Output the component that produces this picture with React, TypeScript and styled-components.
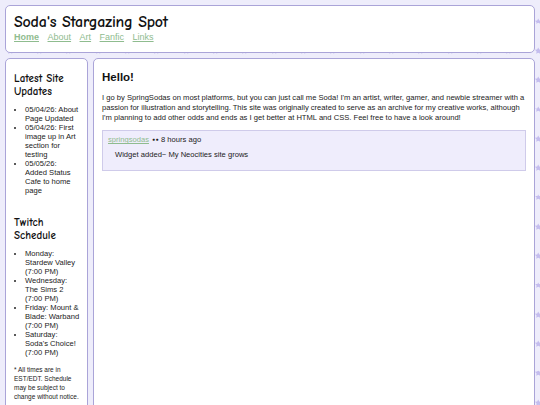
import React from "react";
import styled, { createGlobalStyle } from "styled-components";

const starTile = encodeURIComponent(
  `<svg xmlns="http://www.w3.org/2000/svg" width="29.33" height="29.33"><path d="M10 18l1 2.1 2.3.3-1.7 1.6.4 2.3-2-1.1-2 1.1.4-2.3-1.7-1.6 2.3-.3z" fill="#c4bdee"/></svg>`
);

const GlobalStyle = createGlobalStyle`
  *, *::before, *::after {
    box-sizing: border-box;
  }
  html, body {
    margin: 0;
    padding: 0;
  }
  body {
    background-color: #eeedfb;
    background-image: url("data:image/svg+xml,${starTile}");
    background-size: 29.33px 29.33px;
    font-family: "Liberation Sans", Arial, sans-serif;
    color: #111;
  }
`;

const Page = styled.div`
  display: flex;
  flex-direction: column;
  gap: 5px;
  padding: 5px;
`;

const Box = styled.div`
  background: #fff;
  border: 1px solid #aaa4d8;
  border-radius: 5px;
`;

const Header = styled(Box)`
  height: 48px;
  padding: 0 8px;
`;

const SiteTitle = styled.h1`
  margin: 7px 0 0;
  font-family: "Comic Sans MS", "Comic Neue", "DejaVu Sans", sans-serif;
  font-size: 16px;
  font-weight: bold;
  line-height: 18px;
  letter-spacing: -0.2px;
`;

const Nav = styled.nav`
  display: flex;
  gap: 8.5px;
  margin-top: 1px;
`;

const NavLink = styled.a<{ $active?: boolean }>`
  color: #8fbc8f;
  font-size: 9px;
  line-height: 10px;
  font-weight: ${(p) => (p.$active ? "bold" : "normal")};
  text-decoration: underline;
`;

const Columns = styled.div`
  display: flex;
  gap: 5px;
  align-items: stretch;
`;

const Sidebar = styled(Box)`
  width: 83px;
  flex: none;
  min-height: 420px;
  padding: 0 1px 0 8px;
`;

const SideHeading = styled.h2<{ $top: number }>`
  margin: ${(p) => p.$top}px 0 0;
  font-family: "Comic Sans MS", "Comic Neue", "DejaVu Sans", sans-serif;
  font-size: 11px;
  font-weight: bold;
  line-height: 13px;
`;

const SideList = styled.ul`
  margin: 7px 6px 0 0;
  padding-left: 11px;
  font-size: 7.6px;
  line-height: 9px;
  color: #222;
  li::marker {
    font-size: 7px;
  }
`;

const Footnote = styled.p`
  width: 70px;
  margin: 8px 0 0;
  font-size: 6.5px;
  line-height: 9px;
  color: #222;
`;

const Main = styled(Box)`
  flex: 1;
  min-height: 420px;
  padding: 0 8px;
`;

const Hello = styled.h2`
  margin: 11px 0 0;
  font-size: 11.5px;
  font-weight: bold;
  line-height: 14px;
`;

const Intro = styled.p`
  margin: 9px 0 0;
  font-size: 7.6px;
  line-height: 9.8px;
  color: #222;
`;

const Status = styled.div`
  margin-top: 8px;
  background: #efedfc;
  border: 1px solid #cfcbea;
  padding: 4px 5px 10px;
  font-size: 7.6px;
  line-height: 9.5px;
  color: #222;
`;

const StatusName = styled.a`
  color: #8fbc8f;
  text-decoration: underline;
`;

const Dots = styled.span`
  font-size: 5px;
  letter-spacing: 0.5px;
  margin: 0 2px 0 3px;
  vertical-align: 1px;
`;

const StatusBody = styled.div`
  margin: 5.5px 0 0 7px;
`;

const pm = "(7:00\u00a0PM)";

export default function App() {
  return (
    <>
      <GlobalStyle />
      <Page>
        <Header>
          <SiteTitle>Soda's Stargazing Spot</SiteTitle>
          <Nav>
            <NavLink $active>Home</NavLink>
            <NavLink>About</NavLink>
            <NavLink>Art</NavLink>
            <NavLink>Fanfic</NavLink>
            <NavLink>Links</NavLink>
          </Nav>
        </Header>
        <Columns>
          <Sidebar>
            <SideHeading $top={13}>Latest Site Updates</SideHeading>
            <SideList>
              <li>05/04/26: About Page Updated</li>
              <li>05/04/26: First image up in Art section for testing</li>
              <li>05/05/26: Added Status Cafe to home page</li>
            </SideList>
            <SideHeading $top={21}>Twitch Schedule</SideHeading>
            <SideList>
              <li>Monday: Stardew Valley {pm}</li>
              <li>Wednesday: The Sims 2 {pm}</li>
              <li>Friday: Mount &amp; Blade: Warband {pm}</li>
              <li>Saturday: Soda's Choice! {pm}</li>
            </SideList>
            <Footnote>
              * All times are in EST/EDT. Schedule may be subject to change
              without notice.
            </Footnote>
          </Sidebar>
          <Main>
            <Hello>Hello!</Hello>
            <Intro>
              I go by SpringSodas on most platforms, but you can just call me
              Soda! I'm an artist, writer, gamer, and newbie streamer with a
              passion for illustration and storytelling. This site was
              originally created to serve as an archive for my creative works,
              although I'm planning to add other odds and ends as I get better at
              HTML and CSS. Feel free to have a look around!
            </Intro>
            <Status>
              <div>
                <StatusName>springsodas</StatusName>
                <Dots>●●</Dots>8 hours ago
              </div>
              <StatusBody>Widget added~ My Neocities site grows</StatusBody>
            </Status>
          </Main>
        </Columns>
      </Page>
    </>
  );
}
